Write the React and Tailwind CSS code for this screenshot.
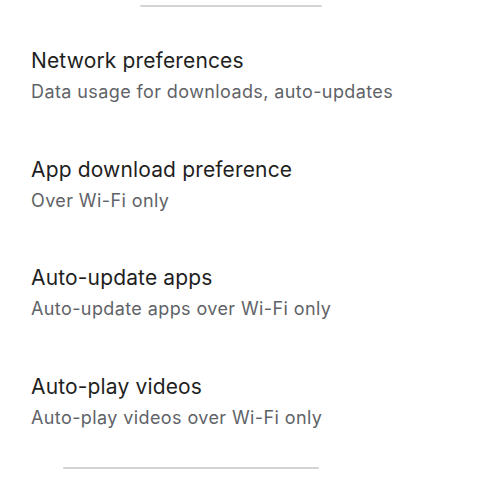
const settings = [
  { title: 'Network preferences', subtitle: 'Data usage for downloads, auto-updates' },
  { title: 'App download preference', subtitle: 'Over Wi-Fi only' },
  { title: 'Auto-update apps', subtitle: 'Auto-update apps over Wi-Fi only' },
  { title: 'Auto-play videos', subtitle: 'Auto-play videos over Wi-Fi only' },
]

export default function App() {
  return (
    <div className="w-[479px] h-[500px] bg-white overflow-hidden" style={{ fontFamily: 'Inter, "Liberation Sans", sans-serif' }}>
      {/* top divider */}
      <div className="pt-[5px] pl-[140px]">
        <div className="w-[182px] h-[2px] rounded-full bg-[#d4d4d4]" />
      </div>

      <div className="pt-[40px] pl-[31px] flex flex-col">
        {settings.map((s) => (
          <div key={s.title} className="h-[108.5px] flex flex-col">
            <div className="text-[21px] leading-[28px] tracking-[0.15px] text-[#1f1f1f]">{s.title}</div>
            <div className="text-[18px] leading-[24px] tracking-[0.4px] mt-[5px] text-[#5f6368]">{s.subtitle}</div>
          </div>
        ))}
      </div>

      {/* bottom divider */}
      <div className="pl-[63px] -mt-[14px]">
        <div className="w-[256px] h-[2px] rounded-full bg-[#d4d4d4]" />
      </div>
    </div>
  )
}
